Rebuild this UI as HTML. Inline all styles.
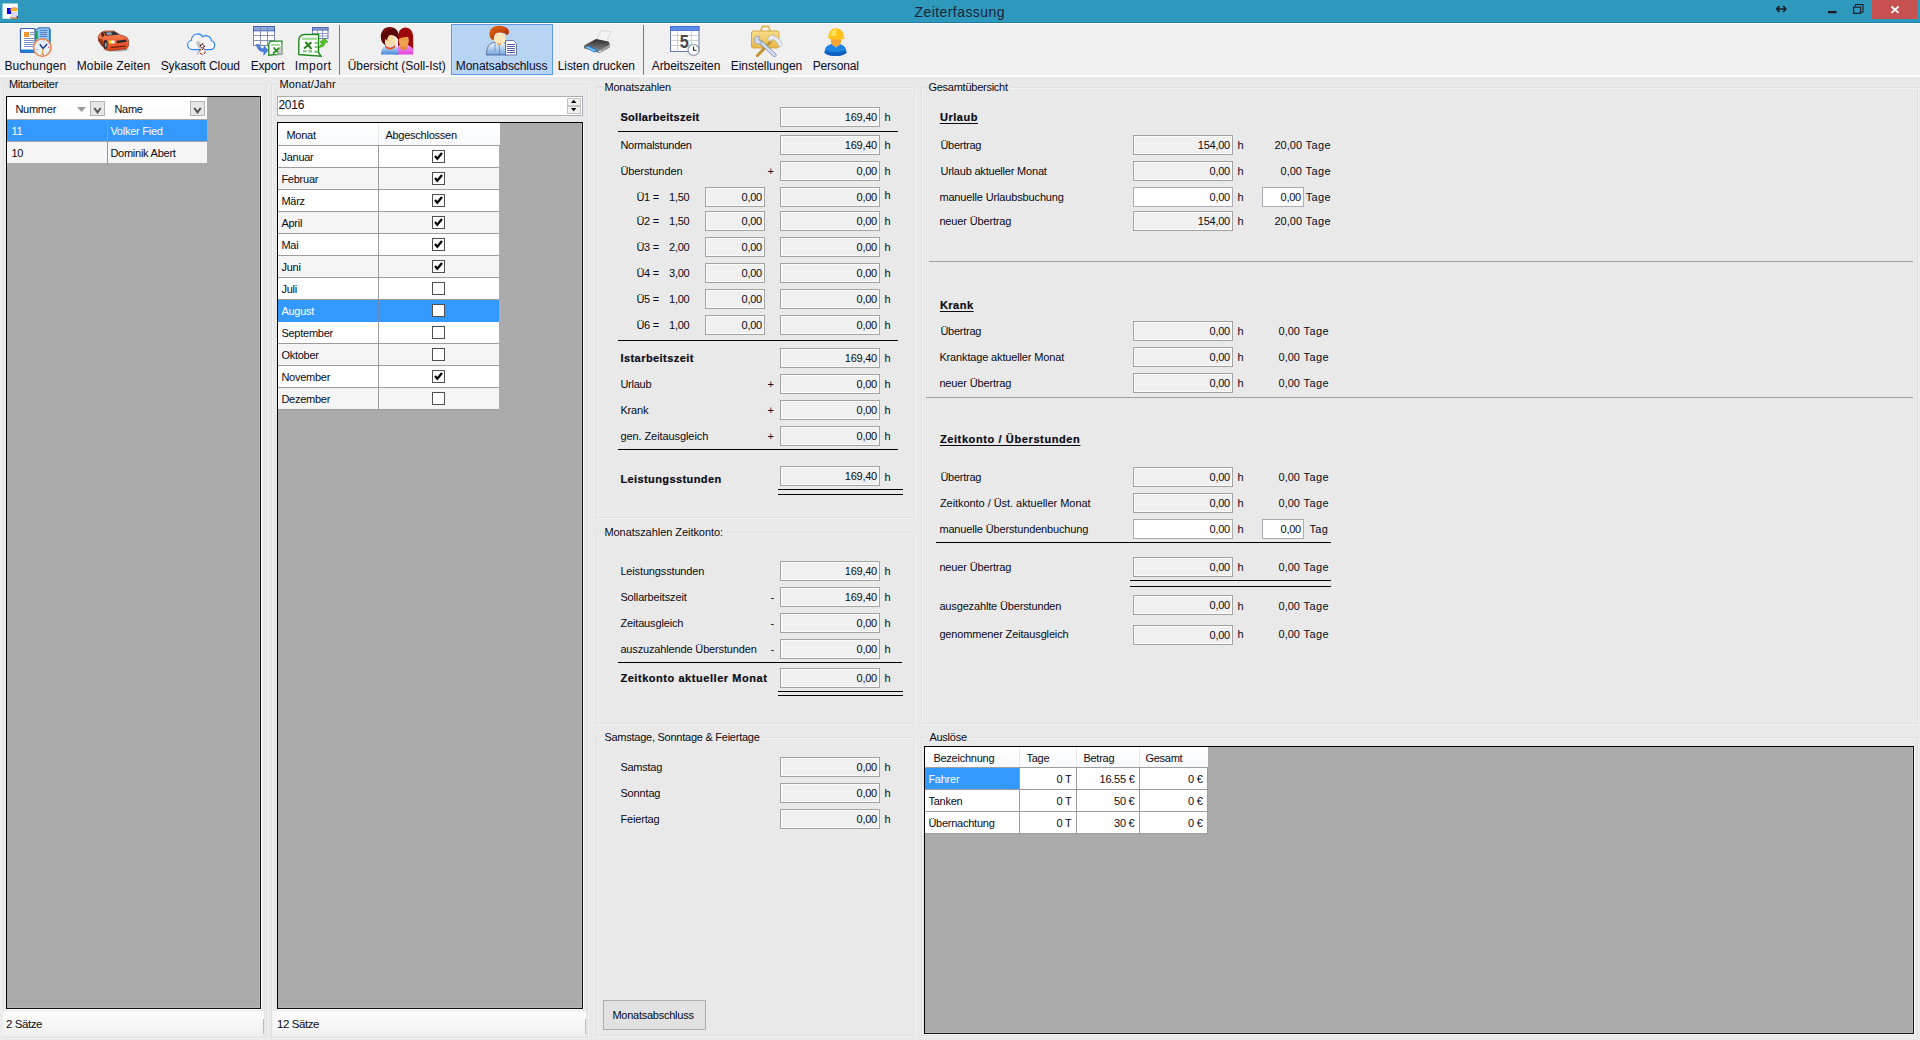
<!DOCTYPE html>
<html lang="de"><head><meta charset="utf-8"><title>Zeiterfassung</title>
<style>
html,body{margin:0;padding:0}
body{width:1920px;height:1040px;overflow:hidden;position:relative;background:#e9e9e9;font-family:"Liberation Sans",sans-serif;font-size:11px;color:#000}
div,span{position:absolute;box-sizing:border-box}
.t{white-space:pre;line-height:14px;height:14px;letter-spacing:-0.25px;color:#0a0a14}
.t.b{font-weight:bold;letter-spacing:0.3px;-webkit-text-stroke:0.2px #0a0a14}
.t.u{text-decoration:underline;text-underline-offset:2px}
.t.wh{color:#fff}
.tb{white-space:pre;font-size:12px;line-height:16px;color:#0c0c1c;text-align:center;letter-spacing:0.15px}
.bx{background:#f0f0f0;border:1px solid #a2a2a2;box-shadow:inset 0 0 0 1px #fcfcfc}
.bx.w{background:#fff;box-shadow:none;border-color:#abadb3}
.bx span{right:2px;top:2px;line-height:14px;letter-spacing:-0.25px;white-space:pre;color:#0a0a14}
.grid{background:#ababab;border:1px solid #000;border-right-color:#111;border-bottom-color:#111}
</style></head><body>

<div style="left:0px;top:0px;width:1920px;height:23px;background:#2e99bd;border-bottom:1px solid #217ea0"></div>
<span style="left:914.500px;top:4px;font-size:14px;line-height:17px;letter-spacing:0.43px;color:#1c2438;white-space:pre">Zeiterfassung</span>
<svg style="position:absolute;left:0;top:0" width="24" height="23" viewBox="0 0 24 23"><rect x="2.500" y="3.500" width="15.300" height="15.200" fill="#fff"/><rect x="7" y="8" width="4.200" height="6" fill="#0404f0"/><ellipse cx="14" cy="9.800" rx="3.800" ry="1.500" fill="#f8b020"/><path d="M10.500 8.600c2-1 5-1 7 0" stroke="#f06020" stroke-width="0.800" fill="none"/><path d="M11.500 12h5.500l.5 5h-7z" fill="#dcd8fc"/><path d="M10 16.500l1 2.200h6.800v-2.500l-1.500 1.200h-4.500z" fill="#b06010"/><rect x="16.800" y="15.800" width="1" height="2.500" fill="#701030"/></svg>
<div style="left:1872px;top:0px;width:45px;height:19px;background:#c75050"></div>
<svg style="position:absolute;left:1770px;top:0" width="150" height="22" viewBox="0 0 150 22">
<path d="M7 9h8.500M6.300 9l3.200-3M6.300 9l3.200 3M16.200 9l-3.200-3M16.200 9l-3.200 3" stroke="#1a1a24" stroke-width="1.700" fill="none"/>
<rect x="58" y="11" width="8.500" height="2.300" fill="#1a1a24"/>
<path d="M85.500 6.500v-2h7.500v7.500h-2" stroke="#1a1a24" stroke-width="1.050" fill="none"/>
<rect x="83.600" y="7.100" width="7" height="6.200" stroke="#1a1a24" stroke-width="1.150" fill="none"/>
<path d="M121.400 6.500l7.200 6.300M128.600 6.500l-7.200 6.300" stroke="#fff" stroke-width="1.750" fill="none"/>
</svg>
<div style="left:0px;top:23px;width:1920px;height:54px;background:#f0f0f0"></div>
<div style="left:0px;top:23px;width:1920px;height:1px;background:#fafafa"></div>
<div style="left:0px;top:74px;width:1920px;height:1px;background:#f3f3f3"></div>
<div style="left:0px;top:75px;width:1920px;height:1px;background:#f8f8f8"></div>
<div style="left:0px;top:76px;width:1920px;height:1px;background:#fff"></div>
<div style="left:451px;top:24px;width:102px;height:51px;background:#b7d4f3;border:1px solid #5a9cea"></div>
<div style="left:339px;top:25px;width:1px;height:50px;background:#7c7c7c"></div>
<div style="left:643px;top:25px;width:1px;height:50px;background:#7c7c7c"></div>
<span class="tb" style="left:-24.6px;width:120px;top:58px;letter-spacing:0.14px">Buchungen</span>
<span class="tb" style="left:53.5px;width:120px;top:58px;letter-spacing:0.11px">Mobile Zeiten</span>
<span class="tb" style="left:140.3px;width:120px;top:58px;letter-spacing:-0.11px">Sykasoft Cloud</span>
<span class="tb" style="left:207.5px;width:120px;top:58px;letter-spacing:-0.18px">Export</span>
<span class="tb" style="left:253.2px;width:120px;top:58px;letter-spacing:0.45px">Import</span>
<span class="tb" style="left:336.7px;width:120px;top:58px;letter-spacing:-0.03px">Übersicht (Soll-Ist)</span>
<span class="tb" style="left:441.6px;width:120px;top:58px;letter-spacing:-0.07px">Monatsabschluss</span>
<span class="tb" style="left:536.3px;width:120px;top:58px;letter-spacing:-0.06px">Listen drucken</span>
<span class="tb" style="left:626px;width:120px;top:58px;letter-spacing:-0.06px">Arbeitszeiten</span>
<span class="tb" style="left:706.5px;width:120px;top:58px;letter-spacing:-0.04px">Einstellungen</span>
<span class="tb" style="left:775.7px;width:120px;top:58px;letter-spacing:-0.17px">Personal</span>

<svg style="position:absolute;left:0;top:0" width="900" height="80" viewBox="0 0 900 80">
<defs>
<linearGradient id="gbl" x1="0" y1="0" x2="0" y2="1"><stop offset="0" stop-color="#e8f2fc"/><stop offset="1" stop-color="#3f86d8"/></linearGradient>
<linearGradient id="gpk" x1="0" y1="0" x2="0" y2="1"><stop offset="0" stop-color="#f8a0f8"/><stop offset="1" stop-color="#e040d8"/></linearGradient>
<linearGradient id="gpr" x1="0" y1="0" x2="0" y2="1"><stop offset="0" stop-color="#2c2c2c"/><stop offset="1" stop-color="#8a8a8a"/></linearGradient>
<linearGradient id="gsh" x1="0" y1="0" x2="0" y2="1"><stop offset="0" stop-color="#f4f8ff"/><stop offset="1" stop-color="#6fa4dc"/></linearGradient>
<linearGradient id="ghr" x1="0" y1="0" x2="1" y2="1"><stop offset="0" stop-color="#e06a10"/><stop offset="1" stop-color="#a82400"/></linearGradient>
<linearGradient id="gcar" x1="0" y1="0" x2="0" y2="1"><stop offset="0" stop-color="#f88a5c"/><stop offset="0.55" stop-color="#ee6034"/><stop offset="1" stop-color="#dc441c"/></linearGradient>
<linearGradient id="gbx" x1="0" y1="0" x2="0" y2="1"><stop offset="0" stop-color="#f8dc88"/><stop offset="1" stop-color="#e8b848"/></linearGradient>
</defs>
<!-- Buchungen: book + clock -->
<g>
<path d="M35 30l4-2.200h10.500v23.700h-14.500z" fill="#8cc4f0" stroke="#3a64b8" stroke-width="1"/>
<rect x="49" y="29" width="1.800" height="21" fill="#2a78d8"/>
<rect x="36" y="31" width="1.800" height="8" fill="#18a848"/>
<path d="M40 30.500h7M40 32.500h7M40 34.500h7M40 36.500h7" stroke="#5a7ac8" stroke-width="0.900"/>
<rect x="20.500" y="28.500" width="14.500" height="24" rx="1" fill="#fff" stroke="#3a5eb4" stroke-width="1.200"/>
<rect x="21" y="49.500" width="13.500" height="3" fill="#1c7ed0"/>
<rect x="24" y="32" width="5" height="5" fill="#f09830"/>
<path d="M30 32.500h4M30 34.500h4M24 38.500h10M24 40.500h10M24 42.500h10M24 44.500h10M24 46.500h10" stroke="#7484c4" stroke-width="0.900"/>
<circle cx="42.300" cy="47.600" r="8.700" fill="#e6f2fb" stroke="#ea8a58" stroke-width="1.700"/>
<path d="M39.800 44.200l3.300 4.300l4-4.500" stroke="#2c3c94" stroke-width="1.500" fill="none"/>
<path d="M43.100 48.500l-1.200 6.500" stroke="#e89838" stroke-width="1.100"/>
<circle cx="43.300" cy="41" r="0.600" fill="#d04080"/><circle cx="48.600" cy="47.300" r="0.600" fill="#d04080"/><circle cx="37" cy="49.500" r="0.600" fill="#d04080"/><circle cx="43.300" cy="54" r="0.700" fill="#d04080"/>
</g>
<!-- Mobile Zeiten: car -->
<g>
<ellipse cx="116" cy="49.500" rx="13" ry="2" fill="#000" opacity="0.250"/>
<path d="M98 37l2.500-4l3.500-2h10l5.500 3.500l7 2.500l2 3v6l-2.500 3l-16.500 1.800l-4.500-1.800l-6-8z" fill="url(#gcar)" stroke="#7a2810" stroke-width="0.600"/>
<path d="M104 32l10.500-.5l4.500 3.200l-13.500 1z" fill="#30323a"/>
<path d="M106 32.500l5-.3l1.500 2.300l-5.500.5z" fill="#9aa0ac"/>
<path d="M101 33l2.300-1.200l1.200 4l-2.500 1.500z" fill="#5a2018"/><path d="M98.200 38l4.500 1.500l1 6.500l-1.500 1l-4-6z" fill="#8a3018" opacity="0.850"/>
<ellipse cx="105.500" cy="44.500" rx="2.100" ry="4.400" fill="#2a2628"/>
<ellipse cx="105.700" cy="44.800" rx="1" ry="2.600" fill="#9a9a9e"/>
<rect x="108.800" y="40.500" width="3" height="3" fill="#e8e038"/>
<rect x="111.500" y="40.500" width="3.200" height="3" fill="#fdfdf4"/>
<path d="M116.500 40.800l9.500-1.200l.8 2.200l-9.800 1.500z" fill="#2c2a30"/>
<path d="M111 47.500l14.500-1.500" stroke="#4a1c10" stroke-width="1.100"/>
</g>
<!-- Sykasoft Cloud -->
<g>
<path d="M192.800 49.600h17.800a4.500 4.500 0 0 0 .8-8.800a5.300 5.300 0 0 0-8.600-3.900a6.100 6.100 0 0 0-11.300 3.400a4.700 4.700 0 0 0 1.300 9.300z" fill="#f6f6f6" stroke="#2a86fa" stroke-width="1.150"/>
<path d="M200.300 39.500c-1 3-1.400 7-1.200 10.500l-2.500 4.500l1.800-.3c1.200-3.500 2-9 1.900-14.700z" fill="#a8a8a8"/>
<path d="M196 42c.6 3 1.600 5.200 3 6.500l.5-8z" fill="#c4c4c4"/>
<circle cx="202.500" cy="43.500" r="0.700" fill="#7a1010"/>
<circle cx="202.300" cy="46.300" r="1.700" fill="#fff" stroke="#801818" stroke-width="0.900"/>
<ellipse cx="202.500" cy="51.300" rx="2.700" ry="3.200" fill="#f4f0f0" stroke="#8a1414" stroke-width="1" stroke-dasharray="3 1.500"/>
<circle cx="200.500" cy="45.200" r="0.600" fill="#000"/><circle cx="204.400" cy="46.300" r="0.600" fill="#000"/><circle cx="202.500" cy="49.500" r="0.600" fill="#000"/>
</g>
<!-- Export -->
<g>
<rect x="253.500" y="26.500" width="21" height="19" fill="#fff" stroke="#7a86a8" stroke-width="1"/>
<rect x="253.500" y="26.500" width="21" height="4.300" fill="#8aa8e0" stroke="#4460b0" stroke-width="1"/>
<path d="M260.500 26.500v19M267.500 26.500v19M253.500 35.500h21M253.500 40.500h21" stroke="#7a86a8" stroke-width="0.900"/>
<path d="M256.500 44.500c.5 5 4 7.500 7.500 7.200l-.3 3.600l4.300-5l-3.800-4.200l-.2 2.600c-2.500 0-4.500-1.300-5.200-4.500z" fill="#4a80e0" stroke="#2a58c0" stroke-width="0.500"/>
<path d="M268.800 44.500c0-2 1.300-3.300 3.300-3.300h9.800v12.800l-13.100 1.200z" fill="#fff" stroke="#1f8a1c" stroke-width="1.300"/>
<path d="M271 44h9v2h-9z" fill="#a8dca0"/>
<path d="M273.500 47.500l5.500 6M279.500 47.800l-6.500 5.700" stroke="#2a8a20" stroke-width="1.800"/>
<path d="M282.300 42.500l1 12.500l-8 1z" fill="#b8b8b8" opacity="0.700"/>
</g>
<!-- Import -->
<g>
<rect x="312.500" y="27.500" width="15.500" height="11" fill="#fff" stroke="#5a6aa8" stroke-width="0.900"/>
<rect x="312.500" y="27.500" width="15.500" height="2.600" fill="#8098d8" stroke="#4a60a8" stroke-width="0.800"/>
<path d="M317.500 27.500v11M322.500 27.500v11M312.500 33.500h15.500M312.500 36h15.500" stroke="#8088b8" stroke-width="0.800"/>
<path d="M298.800 41c0-4 2.400-6.500 6-6.500h13.700v18l2.500 3.700l-22.200-1.700z" fill="#fff" stroke="#1f8a1c" stroke-width="1.400"/>
<path d="M302 37.500h15v2.500h-15z" fill="#a8dca0"/>
<path d="M305.500 42l6 7M311.500 42.300l-7.500 6.200" stroke="#2a8018" stroke-width="2"/>
<path d="M303 50h3.500v2.500h-3.500zM308.500 50h3.500v2.500h-3.500zM314.500 50.500h3.500v2.500h-3.500zM314.500 46h3.500v2h-3.500zM314.500 42h3.500v2h-3.500z" fill="#88c880"/>
<path d="M318.500 48l3.200-4.500l-1.800-1.400l4.600-3.900l3.500 4l-2-.2l-2.500 4.200z" fill="#58c030" stroke="#3a9a18" stroke-width="0.600"/>
</g>
<!-- Uebersicht: two people -->
<g transform="translate(0,0.6)">
<path d="M398 50v-13.500c0-5.500 3-9.500 7.500-9.500s7.700 4 7.700 10v13z" fill="#9c0a0a"/>
<path d="M398 39c0-5 2-8 6-8.500c4 0 6.500 2.500 7 6l1.800 13h-3c.3-5-.3-9-2.300-12.500c-3 .8-7 .5-9.500 2z" fill="#9c0a0a"/>
<path d="M394.500 54c0-6 3.500-10.300 9-10.300c3 0 7 1.200 9.700 4.800v5.500z" fill="url(#gpk)"/>
<path d="M400.300 44.500h6.500v3.500c-2 1.800-4.500 1.800-6.500 0z" fill="#e08a30"/>
<ellipse cx="403.800" cy="40" rx="5.100" ry="6.400" fill="#eea050"/>
<path d="M398 39c0-5 2-8 6-8.500c4 0 6.500 2.500 7 6l.5 4c-1-2-1.500-3-2.500-4.500c-3 .8-7 .5-9.500 2z" fill="#9c0a0a"/>
<path d="M381 54c0-6 3-10 8.800-10s8.800 4 8.800 10z" fill="url(#gbl)"/>
<path d="M384.800 43c1 5.500 9.400 5.500 10.600 0l-.4 3.500c-2 3.200-8 3.200-9.800 0z" fill="#f04810"/>
<ellipse cx="390" cy="40" rx="5.600" ry="5.800" fill="#fbd9a6"/>
<path d="M380.800 36.500c0-6 3.700-10 8.900-10c5.300 0 8.800 3.500 8.800 8.500c0 1.300-.3 2.600-.8 3.500c-1.500-2.800-4.500-4.300-7.600-4.100c-2 1-3.100 3.600-2.900 5.700l-1.700-1.600c-.8 1.600-.8 4.100 0 6.100c-3.100-1.200-4.700-4.500-4.700-8.100z" fill="#5c0808"/>
<path d="M384 31c2-2.500 5-3.500 8-3" stroke="#8a1010" stroke-width="1.200" fill="none"/>
</g>
<!-- Monatsabschluss: person with doc -->
<g>
<path d="M486.500 55c0-7 2-11.500 7.500-12.500h9c3 .5 5 3 5 6.500v6z" fill="url(#gsh)" stroke="#3a5088" stroke-width="0.700"/>
<path d="M495 43v8M499 43l1 12" stroke="#5a78b0" stroke-width="0.700"/>
<ellipse cx="499.800" cy="38.500" rx="6" ry="5.800" fill="#ffe6bc"/>
<path d="M497 42.500c1 1.500 3 1.500 4 0l-.5 2.500h-3z" fill="#f0a040"/>
<path d="M489.500 35c-.5-5.500 3.500-9.200 9-9.200c5.500 0 10.500 2.300 10.500 6c0 1.600-.8 2.900-2 3.400c-1-1.800-4.500-3-8-2.700c-2.500.2-4.300 1.500-4.800 3.500l-.6 4.200c-2.500-.5-3.900-2.600-4.100-5.200z" fill="url(#ghr)"/>
<path d="M505.500 40.500h8l3 3v11.500h-11z" fill="#fff" stroke="#5868a0" stroke-width="0.900"/>
<path d="M507 44.500h8M507 46.500h8M507 48.500h8M507 50.500h8M507 52.500h8" stroke="#4a50a0" stroke-width="0.900"/>
</g>
<!-- Listen drucken: printer -->
<g>
<path d="M597 40l4-9.500l10 1.200l-4.500 10z" fill="#f4f4f4" stroke="#c8c8c8" stroke-width="0.600"/>
<path d="M584 45.500l12-6.500l12.500 2.500l1.500 3l-11 7z" fill="url(#gpr)"/>
<path d="M584 45.500l15 5.500v2l-15-4.800z" fill="#6c6c6c"/>
<path d="M599 51l11-6.500v3l-11 6z" fill="#9c9c9c"/>
<path d="M584.500 47l9.500 5.500l4.500-2l-9.500-4.500z" fill="#2c86d0"/>
<path d="M586 47.500l8 4l2-1l-8-3.700z" fill="#7cc0f0"/>
<path d="M598.500 52l2.500-1.300" stroke="#e8e8e8" stroke-width="1.200"/>
</g>
<!-- Arbeitszeiten: calendar -->
<g>
<rect x="670.500" y="26.500" width="28.500" height="25" fill="#fcfcfc" stroke="#6878a8" stroke-width="1"/>
<rect x="670.500" y="26.500" width="28.500" height="4" fill="#5a8cec" stroke="#4468c8" stroke-width="0.800"/>
<path d="M677.500 31v20.500M691.500 31v20.500M670.500 35.500h28M670.500 40.500h28M670.500 45.500h28" stroke="#c4c4cc" stroke-width="0.800"/>
<text x="0" y="0" transform="translate(679.800,47.600) scale(0.88,1)" font-family="Liberation Sans, sans-serif" font-weight="bold" font-size="18.500" fill="#4a4a4e">5</text>
<circle cx="693.500" cy="50" r="5.500" fill="#f8fafc" stroke="#8894a8" stroke-width="1.200"/>
<path d="M693.500 46.500v3.800h3" stroke="#1c1c24" stroke-width="1" fill="none"/>
</g>
<!-- Einstellungen: toolbox -->
<g>
<path d="M760.500 31.500l2-5h6l2 5" fill="none" stroke="#e0b85c" stroke-width="1.800"/>
<rect x="751.500" y="31" width="27.500" height="17" rx="2" fill="url(#gbx)" stroke="#d0a040" stroke-width="0.900"/>
<path d="M757.500 55.500l13-13.500" stroke="#c09838" stroke-width="3.200" stroke-linecap="round"/>
<path d="M767.500 38.500l4-3.500c4 0 8 3.500 10.500 9c.5 1.500-1 3-3 2.500c-1-3.500-3.500-6.500-6.500-7l-2.500 2z" fill="#e8ecf2" stroke="#a0a8b8" stroke-width="0.600"/>
<path d="M760 41.500l14.500 13.500" stroke="#8a98b4" stroke-width="4" stroke-linecap="round"/>
<path d="M760 41.500l14.500 13.500" stroke="#d4deee" stroke-width="2.400" stroke-linecap="round"/>
<path d="M756 36.500a4.300 4.300 0 1 0 6.500 5.300l-2.300-.3l-1.700-2.700l1-2.500z" fill="#d0daec" stroke="#8a98b4" stroke-width="0.800"/>
</g>
<!-- Personal: worker -->
<g>
<path d="M824.500 53c0-6 3.500-9.500 11-9.500s11 3.500 11 9.500c-3 2.500-8 3-11 3s-8-.5-11-3z" fill="#1e84e4"/>
<path d="M824.500 53c3 2.500 8 3 11 3s8-.5 11-3l-1-3c-5 3-15 3-20 0z" fill="#1060c0"/>
<path d="M834.500 44l1.500 4l1.500-4z" fill="#eef4fc"/>
<ellipse cx="836" cy="41" rx="5.200" ry="5.500" fill="#f7a230"/>
<path d="M828.300 38.500c-.5-6 2.800-10.300 7.700-10.300s8 4 8 9.300l1 1c-5 1.500-12 1.500-16.700 0z" fill="#ffc31c"/>
<path d="M831 33c1-2.500 3.500-3.800 6-3.500c-1 1.500-1.300 4-1 6.500h-5.500z" fill="#ffe45a"/>
</g>
</svg>

<div style="left:0px;top:84px;width:3px;height:956px;background:#ededed"></div>
<div style="left:3px;top:84px;width:264px;height:954px;border:1px solid #dfdfdf;box-shadow:1px 1px 0 #f2f2f2, inset 1px 1px 0 #f2f2f2"></div>
<span class="t" style="left:6.9px;top:77px;background:#e9e9e9;padding:0 2px;letter-spacing:-0.25px">Mitarbeiter</span>
<div style="left:271px;top:84px;width:317px;height:954px;border:1px solid #dfdfdf;box-shadow:1px 1px 0 #f2f2f2, inset 1px 1px 0 #f2f2f2"></div>
<span class="t" style="left:277.4px;top:77px;background:#e9e9e9;padding:0 2px;letter-spacing:0.15px">Monat/Jahr</span>
<div style="left:596px;top:87px;width:319px;height:431px;border:1px solid #dfdfdf;box-shadow:1px 1px 0 #f2f2f2, inset 1px 1px 0 #f2f2f2"></div>
<span class="t" style="left:602.4px;top:80px;background:#e9e9e9;padding:0 2px;letter-spacing:-0.17px">Monatszahlen</span>
<div style="left:596px;top:532px;width:319px;height:192px;border:1px solid #dfdfdf;box-shadow:1px 1px 0 #f2f2f2, inset 1px 1px 0 #f2f2f2"></div>
<span class="t" style="left:602.4px;top:525px;background:#e9e9e9;padding:0 2px;letter-spacing:-0.05px">Monatszahlen Zeitkonto:</span>
<div style="left:596px;top:737px;width:319px;height:299px;border:1px solid #dfdfdf;box-shadow:1px 1px 0 #f2f2f2, inset 1px 1px 0 #f2f2f2"></div>
<span class="t" style="left:602.4px;top:730px;background:#e9e9e9;padding:0 2px;letter-spacing:-0.25px">Samstage, Sonntage &amp; Feiertage</span>
<div style="left:921px;top:87px;width:997px;height:637px;border:1px solid #dfdfdf;box-shadow:1px 1px 0 #f2f2f2, inset 1px 1px 0 #f2f2f2"></div>
<span class="t" style="left:926.4px;top:80px;background:#e9e9e9;padding:0 2px;letter-spacing:-0.25px">Gesamtübersicht</span>
<div style="left:921px;top:737px;width:997px;height:299px;border:1px solid #dfdfdf;box-shadow:1px 1px 0 #f2f2f2, inset 1px 1px 0 #f2f2f2"></div>
<span class="t" style="left:927.4px;top:730px;background:#e9e9e9;padding:0 2px;letter-spacing:-0.25px">Auslöse</span>
<div class="grid" style="left:6px;top:96px;width:255px;height:913px;box-shadow:1px 1px 0 #fff, inset -1px -1px 0 #b8b8b8"></div>
<div style="left:7px;top:97px;width:200px;height:23px;background:linear-gradient(#fff,#fbfbfb);border-bottom:1px solid #a8a8a8"></div>
<span class="t" style="top:101.5px;left:15.4px;">Nummer</span>
<span class="t" style="top:101.5px;left:114.4px;">Name</span>
<svg style="position:absolute;left:70px;top:98px" width="140" height="21" viewBox="70 98 140 21"><path d="M77 107h9l-4.500 5z" fill="#9a9a9a"/><rect x="90.500" y="101.500" width="14" height="14" fill="#e6e6e6" stroke="#b4b4b4"/><path d="M94.300 108l3.200 4.300l3.200-4.300" stroke="#505050" stroke-width="2" fill="none"/><rect x="190.500" y="101.500" width="14" height="14" fill="#e6e6e6" stroke="#b4b4b4"/><path d="M194.300 108l3.200 4.300l3.200-4.300" stroke="#505050" stroke-width="2" fill="none"/></svg>
<div style="left:7px;top:120px;width:200px;height:22px;background:#3399ff;border-bottom:1px solid #a0a4a8"></div>
<div style="left:7px;top:142px;width:200px;height:22px;background:#f5f5f5;border-bottom:1px solid #a8a8a8"></div>
<div style="left:107px;top:120px;width:1px;height:44px;background:#94989e"></div>
<span class="t wh" style="top:124px;left:11.4px;">11</span>
<span class="t wh" style="top:124px;left:110.4px;">Volker Fied</span>
<span class="t" style="top:146px;left:11.4px;">10</span>
<span class="t" style="top:146px;left:110.4px;">Dominik Abert</span>
<div style="left:3px;top:1011px;width:261px;height:26px;background:linear-gradient(#fdfdfd,#f4f4f4 70%,#ededed);border-radius:2px"></div>
<div style="left:263px;top:1019px;width:1px;height:15px;background:#bcbcbc"></div>
<span class="t" style="top:1016.5px;left:5.9px;font-size:11.500px;letter-spacing:-0.4px">2 Sätze</span>
<div style="left:277px;top:96px;width:306px;height:20px;background:#fff;border:1px solid #abadb3"></div>
<span class="t" style="top:98px;left:278.4px;font-size:12px;letter-spacing:-0.2px">2016</span>
<svg style="position:absolute;left:566px;top:97px" width="16" height="18" viewBox="566 97 16 18"><rect x="567.500" y="98.500" width="13" height="7" fill="#efefef" stroke="#c4c4c4"/><rect x="567.500" y="106.500" width="13" height="7" fill="#efefef" stroke="#c4c4c4"/><path d="M571 103h5.400l-2.700-3.200z" fill="#000"/><path d="M571 108h5.400l-2.700 3.200z" fill="#000"/></svg>
<div class="grid" style="left:277px;top:122px;width:306px;height:887px;box-shadow:1px 1px 0 #fff, inset -1px -1px 0 #b8b8b8"></div>
<div style="left:278px;top:123px;width:222px;height:23px;background:linear-gradient(#fff,#f8f9fb);border-bottom:1px solid #9c9ea2"></div>
<div style="left:378px;top:123px;width:1px;height:22px;background:#e4e8ee"></div>
<span class="t" style="top:127.5px;left:286.4px;">Monat</span>
<span class="t" style="top:127.5px;left:385.4px;">Abgeschlossen</span>
<div style="left:278px;top:146px;width:221px;height:22px;background:#fff;border-bottom:1px solid #9c9c9c"></div>
<div style="left:378px;top:146px;width:1px;height:22px;background:#9c9c9c"></div>
<span class="t" style="top:150px;left:281.4px;">Januar</span>
<svg style="position:absolute;left:432px;top:150px" width="13" height="13" viewBox="0 0 13 13"><rect x="0.500" y="0.500" width="12" height="12" fill="#fff" stroke="#505050"/><path d="M3 6l2.300 2.800l4.700-5.800" stroke="#000" stroke-width="2.200" fill="none"/></svg>
<div style="left:278px;top:168px;width:221px;height:22px;background:#f5f5f5;border-bottom:1px solid #9c9c9c"></div>
<div style="left:378px;top:168px;width:1px;height:22px;background:#9c9c9c"></div>
<span class="t" style="top:172px;left:281.4px;">Februar</span>
<svg style="position:absolute;left:432px;top:172px" width="13" height="13" viewBox="0 0 13 13"><rect x="0.500" y="0.500" width="12" height="12" fill="#fff" stroke="#505050"/><path d="M3 6l2.300 2.800l4.700-5.800" stroke="#000" stroke-width="2.200" fill="none"/></svg>
<div style="left:278px;top:190px;width:221px;height:22px;background:#fff;border-bottom:1px solid #9c9c9c"></div>
<div style="left:378px;top:190px;width:1px;height:22px;background:#9c9c9c"></div>
<span class="t" style="top:194px;left:281.4px;">März</span>
<svg style="position:absolute;left:432px;top:194px" width="13" height="13" viewBox="0 0 13 13"><rect x="0.500" y="0.500" width="12" height="12" fill="#fff" stroke="#505050"/><path d="M3 6l2.300 2.800l4.700-5.800" stroke="#000" stroke-width="2.200" fill="none"/></svg>
<div style="left:278px;top:212px;width:221px;height:22px;background:#f5f5f5;border-bottom:1px solid #9c9c9c"></div>
<div style="left:378px;top:212px;width:1px;height:22px;background:#9c9c9c"></div>
<span class="t" style="top:216px;left:281.4px;">April</span>
<svg style="position:absolute;left:432px;top:216px" width="13" height="13" viewBox="0 0 13 13"><rect x="0.500" y="0.500" width="12" height="12" fill="#fff" stroke="#505050"/><path d="M3 6l2.300 2.800l4.700-5.800" stroke="#000" stroke-width="2.200" fill="none"/></svg>
<div style="left:278px;top:234px;width:221px;height:22px;background:#fff;border-bottom:1px solid #9c9c9c"></div>
<div style="left:378px;top:234px;width:1px;height:22px;background:#9c9c9c"></div>
<span class="t" style="top:238px;left:281.4px;">Mai</span>
<svg style="position:absolute;left:432px;top:238px" width="13" height="13" viewBox="0 0 13 13"><rect x="0.500" y="0.500" width="12" height="12" fill="#fff" stroke="#505050"/><path d="M3 6l2.300 2.800l4.700-5.800" stroke="#000" stroke-width="2.200" fill="none"/></svg>
<div style="left:278px;top:256px;width:221px;height:22px;background:#f5f5f5;border-bottom:1px solid #9c9c9c"></div>
<div style="left:378px;top:256px;width:1px;height:22px;background:#9c9c9c"></div>
<span class="t" style="top:260px;left:281.4px;">Juni</span>
<svg style="position:absolute;left:432px;top:260px" width="13" height="13" viewBox="0 0 13 13"><rect x="0.500" y="0.500" width="12" height="12" fill="#fff" stroke="#505050"/><path d="M3 6l2.300 2.800l4.700-5.800" stroke="#000" stroke-width="2.200" fill="none"/></svg>
<div style="left:278px;top:278px;width:221px;height:22px;background:#fff;border-bottom:1px solid #9c9c9c"></div>
<div style="left:378px;top:278px;width:1px;height:22px;background:#9c9c9c"></div>
<span class="t" style="top:282px;left:281.4px;">Juli</span>
<svg style="position:absolute;left:432px;top:282px" width="13" height="13" viewBox="0 0 13 13"><rect x="0.500" y="0.500" width="12" height="12" fill="#fff" stroke="#505050"/></svg>
<div style="left:278px;top:300px;width:221px;height:22px;background:#3399ff;border-bottom:1px solid #3399ff"></div>
<div style="left:378px;top:300px;width:1px;height:22px;background:#6a8fc0"></div>
<span class="t wh" style="top:304px;left:281.4px;">August</span>
<svg style="position:absolute;left:432px;top:304px" width="13" height="13" viewBox="0 0 13 13"><rect x="0.500" y="0.500" width="12" height="12" fill="#fff" stroke="#505050"/></svg>
<div style="left:278px;top:322px;width:221px;height:22px;background:#fff;border-bottom:1px solid #9c9c9c"></div>
<div style="left:378px;top:322px;width:1px;height:22px;background:#9c9c9c"></div>
<span class="t" style="top:326px;left:281.4px;">September</span>
<svg style="position:absolute;left:432px;top:326px" width="13" height="13" viewBox="0 0 13 13"><rect x="0.500" y="0.500" width="12" height="12" fill="#fff" stroke="#505050"/></svg>
<div style="left:278px;top:344px;width:221px;height:22px;background:#f5f5f5;border-bottom:1px solid #9c9c9c"></div>
<div style="left:378px;top:344px;width:1px;height:22px;background:#9c9c9c"></div>
<span class="t" style="top:348px;left:281.4px;">Oktober</span>
<svg style="position:absolute;left:432px;top:348px" width="13" height="13" viewBox="0 0 13 13"><rect x="0.500" y="0.500" width="12" height="12" fill="#fff" stroke="#505050"/></svg>
<div style="left:278px;top:366px;width:221px;height:22px;background:#fff;border-bottom:1px solid #9c9c9c"></div>
<div style="left:378px;top:366px;width:1px;height:22px;background:#9c9c9c"></div>
<span class="t" style="top:370px;left:281.4px;">November</span>
<svg style="position:absolute;left:432px;top:370px" width="13" height="13" viewBox="0 0 13 13"><rect x="0.500" y="0.500" width="12" height="12" fill="#fff" stroke="#505050"/><path d="M3 6l2.300 2.800l4.700-5.800" stroke="#000" stroke-width="2.200" fill="none"/></svg>
<div style="left:278px;top:388px;width:221px;height:22px;background:#f5f5f5;border-bottom:1px solid #9c9c9c"></div>
<div style="left:378px;top:388px;width:1px;height:22px;background:#9c9c9c"></div>
<span class="t" style="top:392px;left:281.4px;">Dezember</span>
<svg style="position:absolute;left:432px;top:392px" width="13" height="13" viewBox="0 0 13 13"><rect x="0.500" y="0.500" width="12" height="12" fill="#fff" stroke="#505050"/></svg>
<div style="left:273px;top:1011px;width:313px;height:26px;background:linear-gradient(#fdfdfd,#f4f4f4 70%,#ededed);border-radius:2px"></div>
<div style="left:585px;top:1019px;width:1px;height:15px;background:#bcbcbc"></div>
<span class="t" style="top:1016.5px;left:276.9px;font-size:11.500px;letter-spacing:-0.4px">12 Sätze</span>
<span class="t b" style="top:110px;left:620.4px;">Sollarbeitszeit</span>
<div class="bx" style="left:780px;top:107px;width:100px;height:20px"><span>169,40</span></div>
<span class="t" style="top:110px;left:884.4px;">h</span>
<div class="hl" style="left:618px;top:131px;width:280px;height:1px;background:#000"></div>
<span class="t" style="top:138px;left:620.4px;letter-spacing:-0.25px;">Normalstunden</span>
<div class="bx" style="left:780px;top:135px;width:100px;height:20px"><span>169,40</span></div>
<span class="t" style="top:138px;left:884.4px;">h</span>
<span class="t" style="top:164px;left:620.4px;letter-spacing:-0.08px;">Überstunden</span>
<span class="t" style="top:164px;left:767.4px;">+</span>
<div class="bx" style="left:780px;top:161px;width:100px;height:20px"><span>0,00</span></div>
<span class="t" style="top:164px;left:884.4px;">h</span>
<span class="t" style="top:190px;left:636.4px;">Ü1 =</span>
<span class="t" style="top:190px;right:1230.5px;">1,50</span>
<div class="bx" style="left:705px;top:187px;width:60px;height:20px"><span>0,00</span></div>
<div class="bx" style="left:780px;top:187px;width:100px;height:20px"><span>0,00</span></div>
<span class="t" style="top:188px;left:884.4px;">h</span>
<span class="t" style="top:214px;left:636.4px;">Ü2 =</span>
<span class="t" style="top:214px;right:1230.5px;">1,50</span>
<div class="bx" style="left:705px;top:211px;width:60px;height:20px"><span>0,00</span></div>
<div class="bx" style="left:780px;top:211px;width:100px;height:20px"><span>0,00</span></div>
<span class="t" style="top:214px;left:884.4px;">h</span>
<span class="t" style="top:240px;left:636.4px;">Ü3 =</span>
<span class="t" style="top:240px;right:1230.5px;">2,00</span>
<div class="bx" style="left:705px;top:237px;width:60px;height:20px"><span>0,00</span></div>
<div class="bx" style="left:780px;top:237px;width:100px;height:20px"><span>0,00</span></div>
<span class="t" style="top:240px;left:884.4px;">h</span>
<span class="t" style="top:266px;left:636.4px;">Ü4 =</span>
<span class="t" style="top:266px;right:1230.5px;">3,00</span>
<div class="bx" style="left:705px;top:263px;width:60px;height:20px"><span>0,00</span></div>
<div class="bx" style="left:780px;top:263px;width:100px;height:20px"><span>0,00</span></div>
<span class="t" style="top:266px;left:884.4px;">h</span>
<span class="t" style="top:292px;left:636.4px;">Ü5 =</span>
<span class="t" style="top:292px;right:1230.5px;">1,00</span>
<div class="bx" style="left:705px;top:289px;width:60px;height:20px"><span>0,00</span></div>
<div class="bx" style="left:780px;top:289px;width:100px;height:20px"><span>0,00</span></div>
<span class="t" style="top:292px;left:884.4px;">h</span>
<span class="t" style="top:318px;left:636.4px;">Ü6 =</span>
<span class="t" style="top:318px;right:1230.5px;">1,00</span>
<div class="bx" style="left:705px;top:315px;width:60px;height:20px"><span>0,00</span></div>
<div class="bx" style="left:780px;top:315px;width:100px;height:20px"><span>0,00</span></div>
<span class="t" style="top:318px;left:884.4px;">h</span>
<div class="hl" style="left:618px;top:340px;width:280px;height:1px;background:#000"></div>
<span class="t b" style="top:351px;left:620.4px;letter-spacing:0.45px;">Istarbeitszeit</span>
<div class="bx" style="left:780px;top:348px;width:100px;height:20px"><span>169,40</span></div>
<span class="t" style="top:351px;left:884.4px;">h</span>
<span class="t" style="top:377px;left:620.4px;letter-spacing:-0.25px;">Urlaub</span>
<span class="t" style="top:377px;left:767.4px;">+</span>
<div class="bx" style="left:780px;top:374px;width:100px;height:20px"><span>0,00</span></div>
<span class="t" style="top:377px;left:884.4px;">h</span>
<span class="t" style="top:403px;left:620.4px;letter-spacing:-0.15px;">Krank</span>
<span class="t" style="top:403px;left:767.4px;">+</span>
<div class="bx" style="left:780px;top:400px;width:100px;height:20px"><span>0,00</span></div>
<span class="t" style="top:403px;left:884.4px;">h</span>
<span class="t" style="top:429px;left:620.4px;letter-spacing:-0.08px;">gen. Zeitausgleich</span>
<span class="t" style="top:429px;left:767.4px;">+</span>
<div class="bx" style="left:780px;top:426px;width:100px;height:20px"><span>0,00</span></div>
<span class="t" style="top:429px;left:884.4px;">h</span>
<div class="hl" style="left:618px;top:449px;width:280px;height:1px;background:#000"></div>
<span class="t b" style="top:472px;left:620.4px;letter-spacing:0.4px;">Leistungsstunden</span>
<div class="bx" style="left:780px;top:466px;width:100px;height:20px"><span>169,40</span></div>
<span class="t" style="top:470px;left:884.4px;">h</span>
<div class="hl" style="left:778px;top:489px;width:125px;height:1px;background:#000"></div>
<div class="hl" style="left:778px;top:494px;width:125px;height:1px;background:#000"></div>
<span class="t" style="top:564px;left:620.4px;letter-spacing:-0.15px;">Leistungsstunden</span>
<div class="bx" style="left:780px;top:561px;width:100px;height:20px"><span>169,40</span></div>
<span class="t" style="top:564px;left:884.4px;">h</span>
<span class="t" style="top:590px;left:620.4px;letter-spacing:-0.15px;">Sollarbeitszeit</span>
<span class="t" style="top:590px;left:770.4px;">-</span>
<div class="bx" style="left:780px;top:587px;width:100px;height:20px"><span>169,40</span></div>
<span class="t" style="top:590px;left:884.4px;">h</span>
<span class="t" style="top:616px;left:620.4px;letter-spacing:-0.15px;">Zeitausgleich</span>
<span class="t" style="top:616px;left:770.4px;">-</span>
<div class="bx" style="left:780px;top:613px;width:100px;height:20px"><span>0,00</span></div>
<span class="t" style="top:616px;left:884.4px;">h</span>
<span class="t" style="top:642px;left:620.4px;letter-spacing:-0.15px;">auszuzahlende Überstunden</span>
<span class="t" style="top:642px;left:770.4px;">-</span>
<div class="bx" style="left:780px;top:639px;width:100px;height:20px"><span>0,00</span></div>
<span class="t" style="top:642px;left:884.4px;">h</span>
<div class="hl" style="left:618px;top:662px;width:284px;height:1px;background:#000"></div>
<span class="t b" style="top:671px;left:620.4px;letter-spacing:0.55px;">Zeitkonto aktueller Monat</span>
<div class="bx" style="left:780px;top:668px;width:100px;height:20px"><span>0,00</span></div>
<span class="t" style="top:671px;left:884.4px;">h</span>
<div class="hl" style="left:778px;top:691px;width:125px;height:1px;background:#000"></div>
<div class="hl" style="left:778px;top:695px;width:125px;height:1px;background:#000"></div>
<span class="t" style="top:760px;left:620.4px;letter-spacing:-0.25px;">Samstag</span>
<div class="bx" style="left:780px;top:757px;width:100px;height:20px"><span>0,00</span></div>
<span class="t" style="top:760px;left:884.4px;">h</span>
<span class="t" style="top:786px;left:620.4px;letter-spacing:-0.15px;">Sonntag</span>
<div class="bx" style="left:780px;top:783px;width:100px;height:20px"><span>0,00</span></div>
<span class="t" style="top:786px;left:884.4px;">h</span>
<span class="t" style="top:812px;left:620.4px;letter-spacing:-0.15px;">Feiertag</span>
<div class="bx" style="left:780px;top:809px;width:100px;height:20px"><span>0,00</span></div>
<span class="t" style="top:812px;left:884.4px;">h</span>
<div style="left:603px;top:1000px;width:103px;height:30px;background:#e1e1e1;border:1px solid #adadad"></div>
<span class="t" style="top:1008px;left:612.4px;">Monatsabschluss</span>
<span class="t b u" style="top:110px;left:939.9px;letter-spacing:0.55px;">Urlaub</span>
<span class="t" style="top:138px;left:940.4px;letter-spacing:-0.25px;">Übertrag</span>
<div class="bx" style="left:1133px;top:135px;width:100px;height:20px"><span>154,00</span></div>
<span class="t" style="top:138px;left:1237.4px;">h</span>
<span class="t" style="top:138px;right:618px;letter-spacing:0px;">20,00</span>
<span class="t" style="top:138px;right:589px;letter-spacing:0.4px;">Tage</span>
<span class="t" style="top:164px;left:940.4px;letter-spacing:-0.2px;">Urlaub aktueller Monat</span>
<div class="bx" style="left:1133px;top:161px;width:100px;height:20px"><span>0,00</span></div>
<span class="t" style="top:164px;left:1237.4px;">h</span>
<span class="t" style="top:164px;right:618px;letter-spacing:0px;">0,00</span>
<span class="t" style="top:164px;right:589px;letter-spacing:0.4px;">Tage</span>
<span class="t" style="top:190px;left:939.4px;letter-spacing:-0.15px;">manuelle Urlaubsbuchung</span>
<div class="bx w" style="left:1133px;top:187px;width:100px;height:20px"><span>0,00</span></div>
<span class="t" style="top:190px;left:1237.4px;">h</span>
<div class="bx w" style="left:1262px;top:187px;width:42px;height:20px"><span>0,00</span></div>
<span class="t" style="top:190px;left:1305.7px;letter-spacing:0.4px;">Tage</span>
<span class="t" style="top:214px;left:939.4px;letter-spacing:-0.15px;">neuer Übertrag</span>
<div class="bx" style="left:1133px;top:211px;width:100px;height:20px"><span>154,00</span></div>
<span class="t" style="top:214px;left:1237.4px;">h</span>
<span class="t" style="top:214px;right:618px;letter-spacing:0px;">20,00</span>
<span class="t" style="top:214px;right:589px;letter-spacing:0.4px;">Tage</span>
<div class="hl" style="left:929px;top:261px;width:984px;height:1px;background:#a0a0a0"></div>
<span class="t b u" style="top:298px;left:939.9px;letter-spacing:0.5px;">Krank</span>
<span class="t" style="top:324px;left:940.4px;letter-spacing:-0.25px;">Übertrag</span>
<div class="bx" style="left:1133px;top:321px;width:100px;height:20px"><span>0,00</span></div>
<span class="t" style="top:324px;left:1237.4px;">h</span>
<span class="t" style="top:324px;right:620px;letter-spacing:0px;">0,00</span>
<span class="t" style="top:324px;right:591px;letter-spacing:0.4px;">Tage</span>
<span class="t" style="top:350px;left:939.4px;letter-spacing:-0.15px;">Kranktage aktueller Monat</span>
<div class="bx" style="left:1133px;top:347px;width:100px;height:20px"><span>0,00</span></div>
<span class="t" style="top:350px;left:1237.4px;">h</span>
<span class="t" style="top:350px;right:620px;letter-spacing:0px;">0,00</span>
<span class="t" style="top:350px;right:591px;letter-spacing:0.4px;">Tage</span>
<span class="t" style="top:376px;left:939.4px;letter-spacing:-0.15px;">neuer Übertrag</span>
<div class="bx" style="left:1133px;top:373px;width:100px;height:20px"><span>0,00</span></div>
<span class="t" style="top:376px;left:1237.4px;">h</span>
<span class="t" style="top:376px;right:620px;letter-spacing:0px;">0,00</span>
<span class="t" style="top:376px;right:591px;letter-spacing:0.4px;">Tage</span>
<div class="hl" style="left:926px;top:397px;width:987px;height:1px;background:#a0a0a0"></div>
<span class="t b u" style="top:432px;left:939.9px;letter-spacing:0.61px;">Zeitkonto / Überstunden</span>
<span class="t" style="top:470px;left:940.4px;letter-spacing:-0.25px;">Übertrag</span>
<div class="bx" style="left:1133px;top:467px;width:100px;height:20px"><span>0,00</span></div>
<span class="t" style="top:470px;left:1237.4px;">h</span>
<span class="t" style="top:470px;right:620px;letter-spacing:0px;">0,00</span>
<span class="t" style="top:470px;right:591px;letter-spacing:0.4px;">Tage</span>
<span class="t" style="top:496px;left:939.9px;letter-spacing:-0.05px;">Zeitkonto / Üst. aktueller Monat</span>
<div class="bx" style="left:1133px;top:493px;width:100px;height:20px"><span>0,00</span></div>
<span class="t" style="top:496px;left:1237.4px;">h</span>
<span class="t" style="top:496px;right:620px;letter-spacing:0px;">0,00</span>
<span class="t" style="top:496px;right:591px;letter-spacing:0.4px;">Tage</span>
<span class="t" style="top:522px;left:939.4px;letter-spacing:-0.15px;">manuelle Überstundenbuchung</span>
<div class="bx w" style="left:1133px;top:519px;width:100px;height:20px"><span>0,00</span></div>
<span class="t" style="top:522px;left:1237.4px;">h</span>
<div class="bx w" style="left:1262px;top:519px;width:42px;height:20px"><span>0,00</span></div>
<span class="t" style="top:522px;left:1309.4px;letter-spacing:0.4px;">Tag</span>
<div class="hl" style="left:936px;top:542px;width:395px;height:1px;background:#000"></div>
<span class="t" style="top:560px;left:939.4px;letter-spacing:-0.15px;">neuer Übertrag</span>
<div class="bx" style="left:1133px;top:557px;width:100px;height:20px"><span>0,00</span></div>
<span class="t" style="top:560px;left:1237.4px;">h</span>
<span class="t" style="top:560px;right:620px;letter-spacing:0px;">0,00</span>
<span class="t" style="top:560px;right:591px;letter-spacing:0.4px;">Tage</span>
<div class="hl" style="left:1130px;top:580px;width:201px;height:1px;background:#000"></div>
<div class="hl" style="left:1130px;top:586px;width:201px;height:1px;background:#000"></div>
<span class="t" style="top:599px;left:939.4px;letter-spacing:-0.15px;">ausgezahlte Überstunden</span>
<div class="bx" style="left:1133px;top:595px;width:100px;height:20px"><span>0,00</span></div>
<span class="t" style="top:599px;left:1237.4px;">h</span>
<span class="t" style="top:599px;right:620px;letter-spacing:0px;">0,00</span>
<span class="t" style="top:599px;right:591px;letter-spacing:0.4px;">Tage</span>
<span class="t" style="top:627px;left:939.4px;letter-spacing:-0.15px;">genommener Zeitausgleich</span>
<div class="bx" style="left:1133px;top:625px;width:100px;height:20px"><span>0,00</span></div>
<span class="t" style="top:627px;left:1237.4px;">h</span>
<span class="t" style="top:627px;right:620px;letter-spacing:0px;">0,00</span>
<span class="t" style="top:627px;right:591px;letter-spacing:0.4px;">Tage</span>
<div class="grid" style="left:924px;top:746px;width:990px;height:288px;box-shadow:1px 1px 0 #fff, inset -1px -1px 0 #b8b8b8"></div>
<div style="left:925px;top:747px;width:283px;height:21px;background:linear-gradient(#fff,#f8f9fb);border-bottom:1px solid #9c9ea2"></div>
<span class="t" style="top:751px;left:933.4px;">Bezeichnung</span>
<span class="t" style="top:751px;left:1026.4px;">Tage</span>
<div style="left:1019px;top:747px;width:1px;height:20px;background:#e4e8ee"></div>
<span class="t" style="top:751px;left:1083.4px;">Betrag</span>
<div style="left:1076px;top:747px;width:1px;height:20px;background:#e4e8ee"></div>
<span class="t" style="top:751px;left:1145.4px;">Gesamt</span>
<div style="left:1139px;top:747px;width:1px;height:20px;background:#e4e8ee"></div>
<div style="left:925px;top:768px;width:283px;height:22px;background:#fff;border-bottom:1px solid #9c9c9c"></div>
<div style="left:1019px;top:768px;width:1px;height:22px;background:#9c9c9c"></div>
<div style="left:1076px;top:768px;width:1px;height:22px;background:#9c9c9c"></div>
<div style="left:1139px;top:768px;width:1px;height:22px;background:#9c9c9c"></div>
<div style="left:1207px;top:768px;width:1px;height:22px;background:#9c9c9c"></div>
<div style="left:925px;top:768px;width:94px;height:21px;background:#3399ff"></div>
<span class="t wh" style="top:772px;left:928.4px;">Fahrer</span>
<span class="t" style="top:772px;right:848.5px;">0 T</span>
<span class="t" style="top:772px;right:785.5px;">16.55 €</span>
<span class="t" style="top:772px;right:717.5px;">0 €</span>
<div style="left:925px;top:790px;width:283px;height:22px;background:#fff;border-bottom:1px solid #9c9c9c"></div>
<div style="left:1019px;top:790px;width:1px;height:22px;background:#9c9c9c"></div>
<div style="left:1076px;top:790px;width:1px;height:22px;background:#9c9c9c"></div>
<div style="left:1139px;top:790px;width:1px;height:22px;background:#9c9c9c"></div>
<div style="left:1207px;top:790px;width:1px;height:22px;background:#9c9c9c"></div>
<span class="t" style="top:794px;left:928.4px;">Tanken</span>
<span class="t" style="top:794px;right:848.5px;">0 T</span>
<span class="t" style="top:794px;right:785.5px;">50 €</span>
<span class="t" style="top:794px;right:717.5px;">0 €</span>
<div style="left:925px;top:812px;width:283px;height:22px;background:#fff;border-bottom:1px solid #9c9c9c"></div>
<div style="left:1019px;top:812px;width:1px;height:22px;background:#9c9c9c"></div>
<div style="left:1076px;top:812px;width:1px;height:22px;background:#9c9c9c"></div>
<div style="left:1139px;top:812px;width:1px;height:22px;background:#9c9c9c"></div>
<div style="left:1207px;top:812px;width:1px;height:22px;background:#9c9c9c"></div>
<span class="t" style="top:816px;left:928.4px;">Übernachtung</span>
<span class="t" style="top:816px;right:848.5px;">0 T</span>
<span class="t" style="top:816px;right:785.5px;">30 €</span>
<span class="t" style="top:816px;right:717.5px;">0 €</span>
</body></html>
